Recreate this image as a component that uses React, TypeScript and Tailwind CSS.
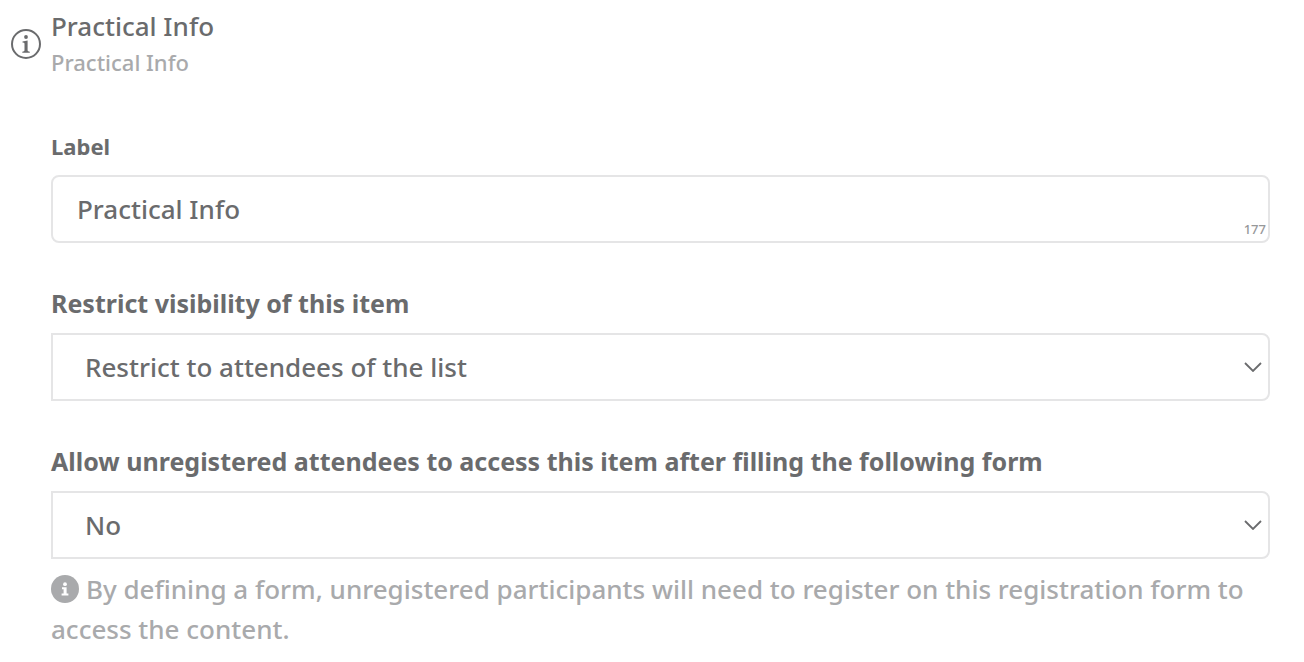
import { useState } from "react";

const MAX_LENGTH = 191;

const InfoOutline = () => {
  return (
    <svg viewBox="0 0 30 30" className="size-[30px] shrink-0" fill="none">
      <circle cx="15" cy="15" r="14" stroke="#6a6b6d" strokeWidth="2" />
      <circle cx="15" cy="8" r="1.9" fill="#6a6b6d" />
      <path
        d="M11.5 12.4 L16.6 11.6 V21.6 Q16.6 22.5 18.8 22.7 V23.8 H11.3 V22.7 Q13.5 22.5 13.5 21.6 V14.4 Q13.5 13.5 11.5 13.4 Z"
        fill="#6a6b6d"
      />
    </svg>
  );
};

const InfoSolid = () => {
  return (
    <svg viewBox="0 0 28 28" className="mr-[7px] mb-[6px] inline size-7">
      <circle cx="14" cy="14" r="14" fill="#a9aaac" />
      <circle cx="14" cy="9.2" r="1.9" fill="#fff" />
      <path d="M11 12.2 H15.6 V18.6 H17.4 V20.6 H10.6 V18.6 H12.6 V14.2 H11 Z" fill="#fff" />
    </svg>
  );
};

const Chevron = () => {
  return (
    <svg
      viewBox="0 0 18 10"
      className="pointer-events-none absolute right-2 top-[29px] h-[10px] w-[18px]"
      fill="none"
    >
      <path d="M1 1 L9 9 L17 1" stroke="#6a6b6d" strokeWidth="1.8" />
    </svg>
  );
};

type SelectFieldProps = {
  id: string;
  label: string;
  options: string[];
};

const SelectField = ({ id, label, options }: SelectFieldProps) => {
  return (
    <div className="mt-[42px]">
      <label htmlFor={id} className="mb-3 block text-[25px] leading-9 font-bold">
        {label}
      </label>
      <div className="relative">
        <select
          id={id}
          className="block h-[68px] w-full appearance-none rounded-r-lg border-2 border-[#e5e5e6] bg-white pr-10 pl-8 text-[26px]"
        >
          {options.map((option) => (
            <option key={option}>{option}</option>
          ))}
        </select>
        <Chevron />
      </div>
    </div>
  );
};

const App = () => {
  const [label, setLabel] = useState("Practical Info");

  return (
    <div className="min-h-screen bg-white pt-2 pr-[34px] pb-3 pl-[11px] font-['Noto_Sans',sans-serif] font-medium text-[#6a6b6d]">
      <header className="flex items-center gap-[10px]">
        <InfoOutline />
        <div>
          <h1 className="text-[26px] leading-9 font-medium">Practical Info</h1>
          <p className="text-[22px] leading-9 text-[#a9aaac]">Practical Info</p>
        </div>
      </header>

      <form className="mt-12 ml-10">
        <label htmlFor="label" className="mb-[11px] block text-[22px] leading-9 font-bold">
          Label
        </label>
        <div className="relative">
          <input
            id="label"
            type="text"
            maxLength={MAX_LENGTH}
            value={label}
            onChange={(e) => setLabel(e.target.value)}
            className="block h-[68px] w-full rounded-lg border-2 border-[#e5e5e6] pr-12 pl-6 text-[26px]"
          />
          <span className="absolute right-1 bottom-1 text-[13px] leading-5 text-[#97989a]">
            {MAX_LENGTH - label.length}
          </span>
        </div>

        <SelectField
          id="visibility"
          label="Restrict visibility of this item"
          options={["Restrict to attendees of the list", "Visible to everyone"]}
        />
        <SelectField
          id="form"
          label="Allow unregistered attendees to access this item after filling the following form"
          options={["No", "Yes"]}
        />

        <p className="mt-[10px] text-[26px] leading-10 text-[#a9aaac]">
          <InfoSolid />
          By defining a form, unregistered participants will need to register on
          this registration form to access the content.
        </p>
      </form>
    </div>
  );
};

export default App;
